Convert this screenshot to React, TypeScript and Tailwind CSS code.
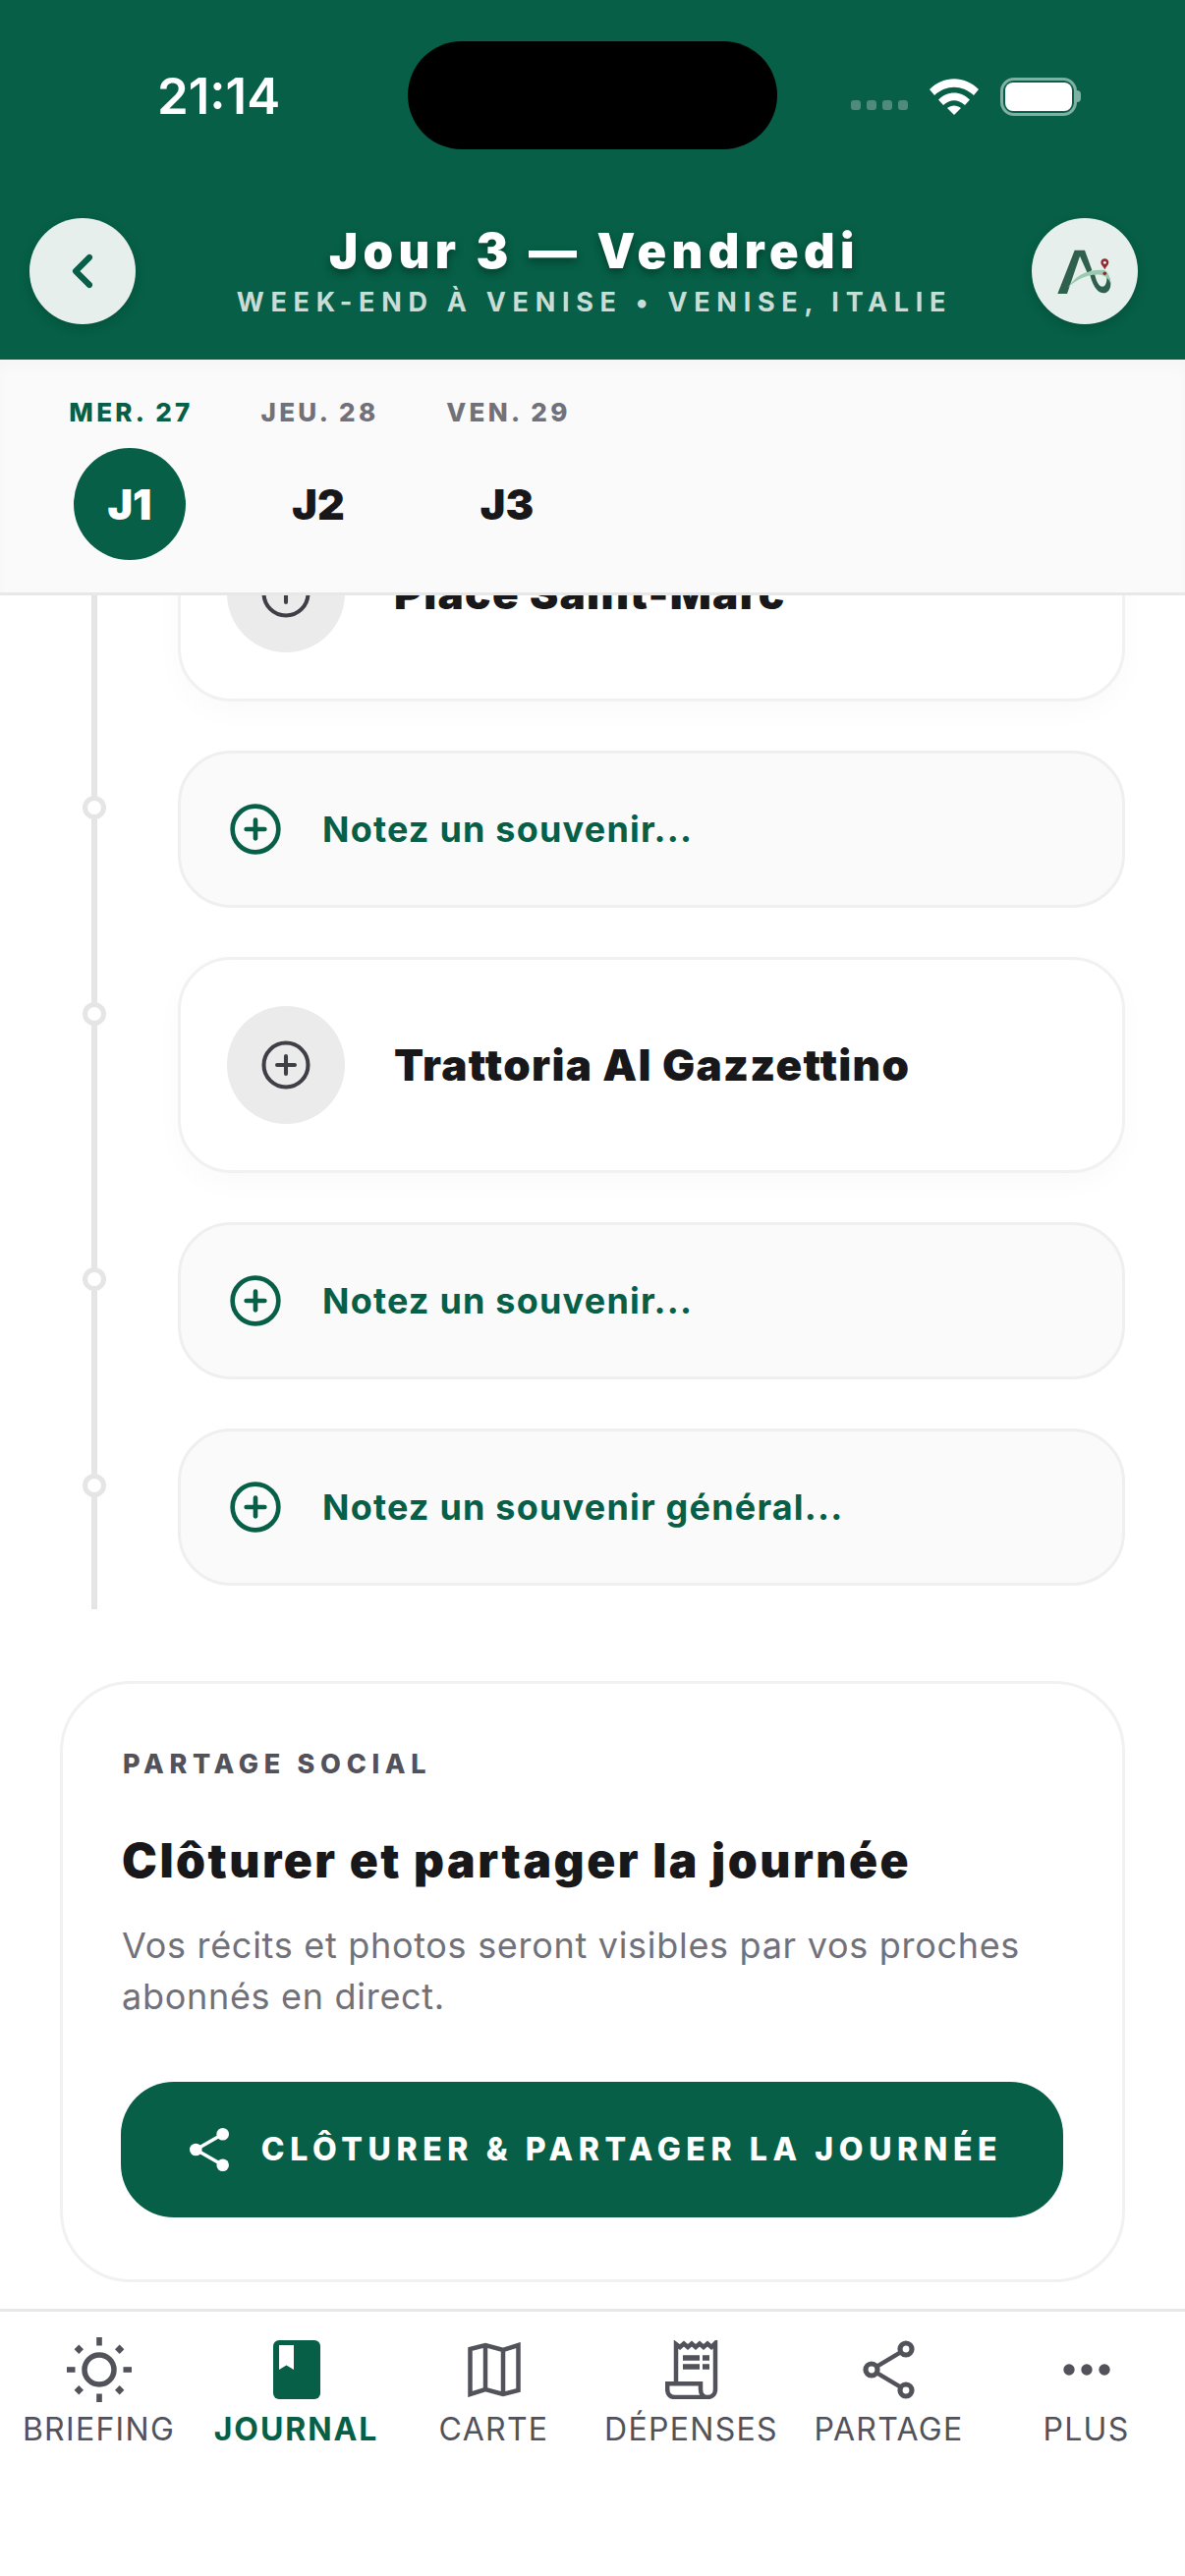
import React from "react";
import { ChevronLeft, CirclePlus } from "lucide-react";

const green = "#065f46";
const grey = "#52525b";

function Logo() {
  return (
    <svg viewBox="140 155 165 135" className="w-[55px] h-[45px]">
      <path d="M141 290 L193 157 H224 L246 218 L232 226 L209 175 L170 290 Z" fill="#2f5f4d" />
      <path d="M238 222 C245 262 262 288 280 288 C298 288 306 270 302 250 C300 240 296 232 290 228 C293 240 292 268 278 268 C266 268 258 250 252 220 Z" fill="#2f5f4d" />
      <path d="M172 272 C190 240 225 215 282 217 C295 220 303 240 302 258 C298 245 290 236 272 232 C235 228 200 245 172 272 Z" fill="#9bcab0" />
      <path d="M285 183 C277 183 273 189 273 195 C273 202 281 208 285 216 C289 208 297 202 297 195 C297 189 293 183 285 183 Z" fill="#8f2a2e" />
      <circle cx="285" cy="195" r="4.5" fill="#e6efec" />
      <circle cx="285" cy="228" r="5.5" fill="#8f2a2e" />
    </svg>
  );
}

function Wifi() {
  return (
    <svg viewBox="0 0 50 37" className="w-[50px] h-[37px]" fill="#fff">
      <path d="M0 11 C14 -3.5 36 -3.5 50 11 L45 17 C33 6 17 6 5 17 Z" />
      <path d="M9 21.5 C18 12 32 12 41 21.5 L36 27 C29 20.5 21 20.5 14 27 Z" />
      <path d="M18 30 C22 26.5 28 26.5 32 30 L25 37 Z" />
    </svg>
  );
}

function Battery() {
  return (
    <div className="flex items-center">
      <div className="w-[78px] h-[39px] rounded-[14px] border-[3.5px] border-[#7fb0a3] p-[2px]">
        <div className="w-full h-full rounded-[8px] bg-white" />
      </div>
      <div className="w-[4px] h-[12px] rounded-r-full bg-[#7fb0a3]" />
    </div>
  );
}

function Dot({ cls }: { cls: string }) {
  return <div className={`absolute left-[-100px] w-[24px] h-[24px] rounded-full bg-white border-[5px] border-[#e5e5e5] ${cls}`} />;
}

function NoteCard({ text }: { text: string }) {
  return (
    <div className="relative h-[160px] mr-[61px] ml-[181px] rounded-[54px] bg-[#fafafa] border-[3px] border-[#efefef] flex items-center pl-[48px]">
      <Dot cls="top-[43px]" />
      <CirclePlus size={56} strokeWidth={2} color={green} className="shrink-0" />
      <span className="ml-[40px] text-[36px] font-bold tracking-[1.2px] text-[#065f46]">{text}</span>
    </div>
  );
}

function PlaceCard({ title, dot }: { title: string; dot?: boolean }) {
  return (
    <div className="relative h-[220px] mr-[61px] ml-[181px] rounded-[54px] bg-white border-[3px] border-[#f1f1f1] shadow-[0_10px_30px_rgba(0,0,0,0.025)] flex items-center pl-[47px]">
      {dot && <Dot cls="top-[43px]" />}
      <div className="w-[120px] h-[120px] rounded-full bg-[#ebebeb] flex items-center justify-center shrink-0">
        <CirclePlus size={54} strokeWidth={1.8} color="#3f3f46" />
      </div>
      <span className="ml-[50px] text-[44px] font-black tracking-[1.3px] text-[#18181b] whitespace-nowrap">{title}</span>
    </div>
  );
}

function SunIcon() {
  return (
    <svg viewBox="0 0 66 66" className="w-[66px] h-[66px]" fill={grey}>
      <circle cx="33" cy="33" r="15" fill="none" stroke={grey} strokeWidth="5.5" />
      <rect x="30.2" y="0" width="5.6" height="8.5" />
      <rect x="30.2" y="57.5" width="5.6" height="8.5" />
      <rect x="0" y="30.2" width="8.5" height="5.6" />
      <rect x="57.5" y="30.2" width="8.5" height="5.6" />
      <path d="M12.3 7.6 L17 12.3 L12.3 17 L7.6 12.3 Z" />
      <path d="M53.7 7.6 L58.4 12.3 L53.7 17 L49 12.3 Z" />
      <path d="M12.3 49 L17 53.7 L12.3 58.4 L7.6 53.7 Z" />
      <path d="M53.7 49 L58.4 53.7 L53.7 58.4 L49 53.7 Z" />
    </svg>
  );
}

function BookIcon() {
  return (
    <svg viewBox="0 0 48 60" className="w-[48px] h-[60px]">
      <rect x="0" y="0" width="48" height="60" rx="6" fill={green} />
      <path d="M6 5 H21 V30 L13.5 25.5 L6 30 Z" fill="#fff" />
    </svg>
  );
}

function MapIcon() {
  return (
    <svg viewBox="0 0 54 56" className="w-[54px] h-[56px]" fill="none" stroke={grey} strokeWidth="4.5">
      <path d="M2.5 7 L18 3 L36 8 L51.5 3 V49 L36 53 L18 48 L2.5 53 Z" />
      <path d="M18 3 V48 M36 8 V53" />
    </svg>
  );
}

function ReceiptIcon() {
  return (
    <svg viewBox="0 0 54 60" className="w-[54px] h-[60px]" fill="none" stroke={grey} strokeWidth="4.5">
      <path d="M11 43 V4 L15 7 L19 3.5 L23 7 L27 3.5 L31 7 L35 3.5 L39 7 L43 3.5 L47 7 L51 3 V50 C51 55 47.5 58 43 58 H10 C5 58 2.2 55 2.2 50 V44.2 H36 V50 C36 55 38.5 58 43 58" />
      <path d="M18 18 H35 M38 18 H45 M18 27 H35 M38 27 H45" strokeWidth="5.5" />
    </svg>
  );
}

function ShareOutlineIcon() {
  return (
    <svg viewBox="0 0 54 60" className="w-[54px] h-[60px]" fill="none" stroke={grey} strokeWidth="5.2">
      <circle cx="44" cy="9" r="6" />
      <circle cx="9" cy="30" r="6" />
      <circle cx="44" cy="51" r="6" />
      <path d="M15 26.4 L38 12.6 M15 33.6 L38 47.4" strokeWidth="4.5" />
    </svg>
  );
}

function ShareFilledIcon() {
  return (
    <svg viewBox="0 0 40 44" className="w-[40px] h-[44px]" fill="#fff">
      <circle cx="33.7" cy="6.3" r="6.3" />
      <circle cx="6.3" cy="22" r="6.3" />
      <circle cx="33.7" cy="37.7" r="6.3" />
      <path d="M6.3 22 L33.7 6.3 M6.3 22 L33.7 37.7" fill="none" stroke="#fff" strokeWidth="3.5" />
    </svg>
  );
}

function MoreIcon() {
  return (
    <svg viewBox="0 0 48 12" className="w-[48px] h-[12px]" fill={grey}>
      <circle cx="6" cy="6" r="5.7" />
      <circle cx="24" cy="6" r="5.7" />
      <circle cx="42" cy="6" r="5.7" />
    </svg>
  );
}

function Tab({ label, active, children }: { label: string; active?: boolean; children: React.ReactNode }) {
  return (
    <div className="flex-1 flex flex-col items-center">
      <div className="h-[70px] flex items-center justify-center">{children}</div>
      <span className={`mt-[6px] text-[32px] leading-[40px] whitespace-nowrap ${active ? "font-bold tracking-[1.9px] text-[#065f46]" : "font-normal tracking-[1.3px] text-[#52525b]"}`}>{label}</span>
    </div>
  );
}

function DayCol({ day, j, active }: { day: string; j: string; active?: boolean }) {
  return (
    <div className="w-[192px] flex flex-col items-center">
      <span className={`pl-[3px] text-[26px] leading-[32px] font-extrabold tracking-[3.3px] whitespace-nowrap ${active ? "text-[#065f46]" : "text-[#71717a]"}`}>{day}</span>
      <div className={`mt-[20px] w-[114px] h-[114px] rounded-full flex items-center justify-center text-[43px] font-black ${active ? "bg-[#065f46] text-white" : "text-[#18181b]"}`}>{j}</div>
    </div>
  );
}

export default function App() {
  return (
    <div className="w-[1206px] h-[2622px] bg-white overflow-hidden flex flex-col font-['Inter',sans-serif]">
      <header className="relative h-[366px] shrink-0 bg-[#065f46] text-white">
        <div className="absolute left-[415px] top-[42px] w-[376px] h-[110px] rounded-[55px] bg-black" />
        <div className="flex items-center justify-between h-[40px] pl-[160px] pr-[106px] translate-y-[78px]">
          <span className="text-[51px] leading-[52px] font-semibold">21:14</span>
          <div className="flex items-center">
            <div className="flex gap-[6px] mr-[22px] mt-[17px]">
              {[0, 1, 2, 3].map((i) => (
                <div key={i} className="w-[10px] h-[10px] rounded-[3px] bg-[#4f8a7a]" />
              ))}
            </div>
            <Wifi />
            <div className="ml-[22px]"><Battery /></div>
          </div>
        </div>
        <div className="absolute left-[30px] right-[48px] top-[222px] flex items-center justify-between">
          <div className="w-[108px] h-[108px] rounded-full bg-[#e6efec] flex items-center justify-center shadow-[0_4px_12px_rgba(0,0,0,0.15)]">
            <ChevronLeft size={56} strokeWidth={2.6} color={green} />
          </div>
          <div className="flex flex-col items-center pl-[22px]">
            <span className="mt-[1px] text-[49px] leading-[52px] font-black tracking-[5.4px] whitespace-nowrap [text-shadow:0_4px_8px_rgba(0,0,0,0.35)]">Jour 3 — Vendredi</span>
            <span className="mt-[10px] text-[27px] leading-[32px] font-bold tracking-[6.7px] text-[#c9dcd6] whitespace-nowrap">WEEK-END À VENISE • VENISE, ITALIE</span>
          </div>
          <div className="w-[108px] h-[108px] rounded-full bg-[#e6efec] flex items-center justify-center shadow-[0_4px_12px_rgba(0,0,0,0.15)]">
            <Logo />
          </div>
        </div>
      </header>

      <div className="h-[240px] shrink-0 bg-[#fafafa] border-b-[3px] border-[#e8e8e8] flex pl-[36px] pt-[38px] shadow-[inset_0_8px_12px_rgba(0,0,0,0.02)] relative z-10">
        <DayCol day="MER. 27" j="J1" active />
        <DayCol day="JEU. 28" j="J2" />
        <DayCol day="VEN. 29" j="J3" />
      </div>

      <main className="relative flex-1 overflow-hidden">
        <div className="absolute left-[93px] top-0 w-[6px] h-[1032px] bg-[#e5e5e5]" />
        <div className="flex flex-col gap-[50px] mt-[-112px]">
          <PlaceCard title="Place Saint-Marc" />
          <NoteCard text="Notez un souvenir..." />
          <PlaceCard title="Trattoria Al Gazzettino" dot />
          <NoteCard text="Notez un souvenir..." />
          <NoteCard text="Notez un souvenir général..." />
        </div>

        <section className="mt-[97px] mx-[61px] h-[612px] rounded-[72px] border-[3px] border-[#f1f1f1] bg-white pl-[59px] pr-[60px] pt-[66px]">
          <div className="pl-[2px] text-[27px] leading-[32px] font-extrabold tracking-[5.7px] text-[#52525b]">PARTAGE SOCIAL</div>
          <h2 className="mt-[52px] pl-[1px] text-[48px] leading-[60px] font-black tracking-[2.5px] text-[#18181b] whitespace-nowrap">Clôturer et partager la journée</h2>
          <p className="mt-[30px] pl-[1px] text-[36px] leading-[52px] tracking-[0.7px] font-normal text-[#71717a]">Vos récits et photos seront visibles par vos proches abonnés en direct.</p>
          <div className="mt-[61px] h-[138px] rounded-[54px] bg-[#065f46] flex items-center justify-center gap-[33px] pl-[8px]">
            <ShareFilledIcon />
            <span className="text-[32px] font-extrabold tracking-[5.6px] text-white whitespace-nowrap">CLÔTURER &amp; PARTAGER LA JOURNÉE</span>
          </div>
        </section>

        <nav className="absolute left-0 right-0 bottom-0 h-[272px] bg-white border-t-[3px] border-[#e8e8e8] flex pt-[24px]">
          <Tab label="BRIEFING"><SunIcon /></Tab>
          <Tab label="JOURNAL" active><BookIcon /></Tab>
          <Tab label="CARTE"><MapIcon /></Tab>
          <Tab label="DÉPENSES"><ReceiptIcon /></Tab>
          <Tab label="PARTAGE"><ShareOutlineIcon /></Tab>
          <Tab label="PLUS"><MoreIcon /></Tab>
        </nav>
      </main>
    </div>
  );
}
